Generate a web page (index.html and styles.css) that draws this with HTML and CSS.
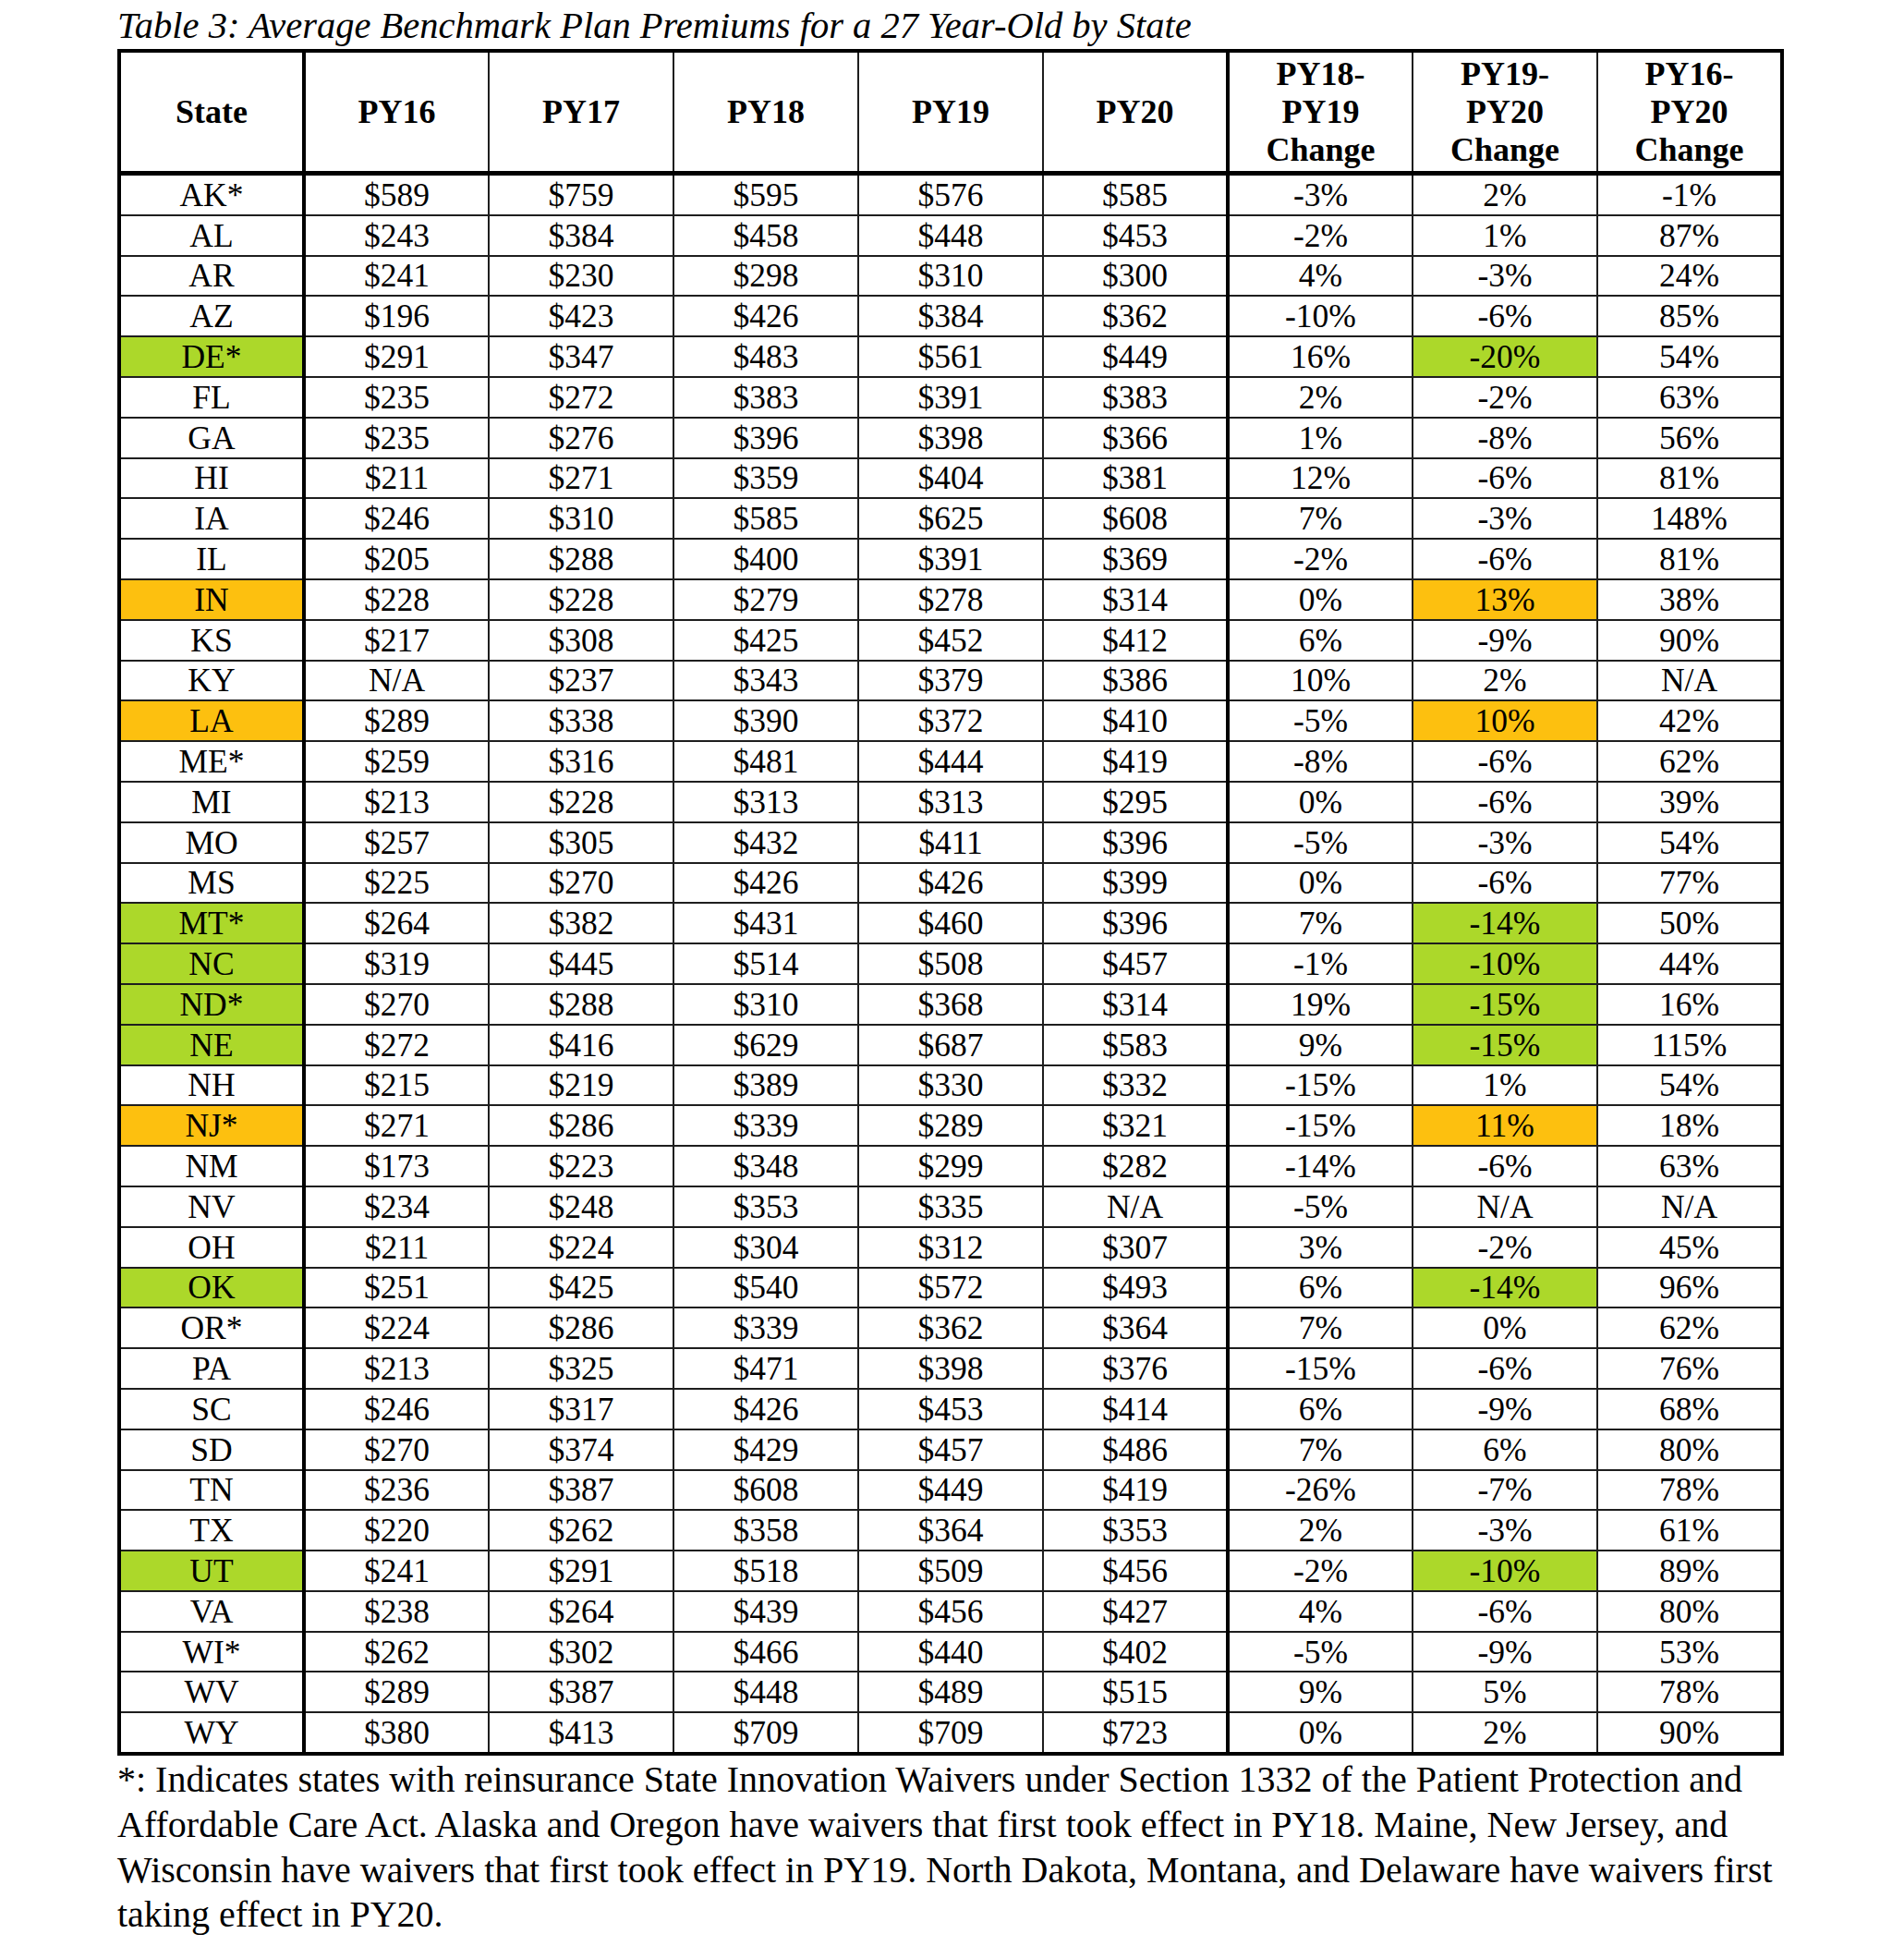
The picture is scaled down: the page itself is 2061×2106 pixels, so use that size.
FILE: index.html
```html
<!DOCTYPE html>
<html>
<head>
<meta charset="utf-8">
<link rel="stylesheet" href="styles.css">
</head>
<body>
<div class="page">
<div class="caption">Table 3: Average Benchmark Plan Premiums for a 27 Year-Old by State</div>
<table class="data">
<colgroup><col><col><col><col><col><col><col><col><col></colgroup>
<thead>
<tr><th class="sep">State</th><th>PY16</th><th>PY17</th><th>PY18</th><th>PY19</th><th class="sep">PY20</th><th>PY18-<br>PY19<br>Change</th><th>PY19-<br>PY20<br>Change</th><th>PY16-<br>PY20<br>Change</th></tr>
</thead>
<tbody>
<tr><td class="sep">AK*</td><td>$589</td><td>$759</td><td>$595</td><td>$576</td><td class="sep">$585</td><td>-3%</td><td>2%</td><td>-1%</td></tr>
<tr><td class="sep">AL</td><td>$243</td><td>$384</td><td>$458</td><td>$448</td><td class="sep">$453</td><td>-2%</td><td>1%</td><td>87%</td></tr>
<tr><td class="sep">AR</td><td>$241</td><td>$230</td><td>$298</td><td>$310</td><td class="sep">$300</td><td>4%</td><td>-3%</td><td>24%</td></tr>
<tr><td class="sep">AZ</td><td>$196</td><td>$423</td><td>$426</td><td>$384</td><td class="sep">$362</td><td>-10%</td><td>-6%</td><td>85%</td></tr>
<tr><td class="sep green">DE*</td><td>$291</td><td>$347</td><td>$483</td><td>$561</td><td class="sep">$449</td><td>16%</td><td class="green">-20%</td><td>54%</td></tr>
<tr><td class="sep">FL</td><td>$235</td><td>$272</td><td>$383</td><td>$391</td><td class="sep">$383</td><td>2%</td><td>-2%</td><td>63%</td></tr>
<tr><td class="sep">GA</td><td>$235</td><td>$276</td><td>$396</td><td>$398</td><td class="sep">$366</td><td>1%</td><td>-8%</td><td>56%</td></tr>
<tr><td class="sep">HI</td><td>$211</td><td>$271</td><td>$359</td><td>$404</td><td class="sep">$381</td><td>12%</td><td>-6%</td><td>81%</td></tr>
<tr><td class="sep">IA</td><td>$246</td><td>$310</td><td>$585</td><td>$625</td><td class="sep">$608</td><td>7%</td><td>-3%</td><td>148%</td></tr>
<tr><td class="sep">IL</td><td>$205</td><td>$288</td><td>$400</td><td>$391</td><td class="sep">$369</td><td>-2%</td><td>-6%</td><td>81%</td></tr>
<tr><td class="sep orange">IN</td><td>$228</td><td>$228</td><td>$279</td><td>$278</td><td class="sep">$314</td><td>0%</td><td class="orange">13%</td><td>38%</td></tr>
<tr><td class="sep">KS</td><td>$217</td><td>$308</td><td>$425</td><td>$452</td><td class="sep">$412</td><td>6%</td><td>-9%</td><td>90%</td></tr>
<tr><td class="sep">KY</td><td>N/A</td><td>$237</td><td>$343</td><td>$379</td><td class="sep">$386</td><td>10%</td><td>2%</td><td>N/A</td></tr>
<tr><td class="sep orange">LA</td><td>$289</td><td>$338</td><td>$390</td><td>$372</td><td class="sep">$410</td><td>-5%</td><td class="orange">10%</td><td>42%</td></tr>
<tr><td class="sep">ME*</td><td>$259</td><td>$316</td><td>$481</td><td>$444</td><td class="sep">$419</td><td>-8%</td><td>-6%</td><td>62%</td></tr>
<tr><td class="sep">MI</td><td>$213</td><td>$228</td><td>$313</td><td>$313</td><td class="sep">$295</td><td>0%</td><td>-6%</td><td>39%</td></tr>
<tr><td class="sep">MO</td><td>$257</td><td>$305</td><td>$432</td><td>$411</td><td class="sep">$396</td><td>-5%</td><td>-3%</td><td>54%</td></tr>
<tr><td class="sep">MS</td><td>$225</td><td>$270</td><td>$426</td><td>$426</td><td class="sep">$399</td><td>0%</td><td>-6%</td><td>77%</td></tr>
<tr><td class="sep green">MT*</td><td>$264</td><td>$382</td><td>$431</td><td>$460</td><td class="sep">$396</td><td>7%</td><td class="green">-14%</td><td>50%</td></tr>
<tr><td class="sep green">NC</td><td>$319</td><td>$445</td><td>$514</td><td>$508</td><td class="sep">$457</td><td>-1%</td><td class="green">-10%</td><td>44%</td></tr>
<tr><td class="sep green">ND*</td><td>$270</td><td>$288</td><td>$310</td><td>$368</td><td class="sep">$314</td><td>19%</td><td class="green">-15%</td><td>16%</td></tr>
<tr><td class="sep green">NE</td><td>$272</td><td>$416</td><td>$629</td><td>$687</td><td class="sep">$583</td><td>9%</td><td class="green">-15%</td><td>115%</td></tr>
<tr><td class="sep">NH</td><td>$215</td><td>$219</td><td>$389</td><td>$330</td><td class="sep">$332</td><td>-15%</td><td>1%</td><td>54%</td></tr>
<tr><td class="sep orange">NJ*</td><td>$271</td><td>$286</td><td>$339</td><td>$289</td><td class="sep">$321</td><td>-15%</td><td class="orange">11%</td><td>18%</td></tr>
<tr><td class="sep">NM</td><td>$173</td><td>$223</td><td>$348</td><td>$299</td><td class="sep">$282</td><td>-14%</td><td>-6%</td><td>63%</td></tr>
<tr><td class="sep">NV</td><td>$234</td><td>$248</td><td>$353</td><td>$335</td><td class="sep">N/A</td><td>-5%</td><td>N/A</td><td>N/A</td></tr>
<tr><td class="sep">OH</td><td>$211</td><td>$224</td><td>$304</td><td>$312</td><td class="sep">$307</td><td>3%</td><td>-2%</td><td>45%</td></tr>
<tr><td class="sep green">OK</td><td>$251</td><td>$425</td><td>$540</td><td>$572</td><td class="sep">$493</td><td>6%</td><td class="green">-14%</td><td>96%</td></tr>
<tr><td class="sep">OR*</td><td>$224</td><td>$286</td><td>$339</td><td>$362</td><td class="sep">$364</td><td>7%</td><td>0%</td><td>62%</td></tr>
<tr><td class="sep">PA</td><td>$213</td><td>$325</td><td>$471</td><td>$398</td><td class="sep">$376</td><td>-15%</td><td>-6%</td><td>76%</td></tr>
<tr><td class="sep">SC</td><td>$246</td><td>$317</td><td>$426</td><td>$453</td><td class="sep">$414</td><td>6%</td><td>-9%</td><td>68%</td></tr>
<tr><td class="sep">SD</td><td>$270</td><td>$374</td><td>$429</td><td>$457</td><td class="sep">$486</td><td>7%</td><td>6%</td><td>80%</td></tr>
<tr><td class="sep">TN</td><td>$236</td><td>$387</td><td>$608</td><td>$449</td><td class="sep">$419</td><td>-26%</td><td>-7%</td><td>78%</td></tr>
<tr><td class="sep">TX</td><td>$220</td><td>$262</td><td>$358</td><td>$364</td><td class="sep">$353</td><td>2%</td><td>-3%</td><td>61%</td></tr>
<tr><td class="sep green">UT</td><td>$241</td><td>$291</td><td>$518</td><td>$509</td><td class="sep">$456</td><td>-2%</td><td class="green">-10%</td><td>89%</td></tr>
<tr><td class="sep">VA</td><td>$238</td><td>$264</td><td>$439</td><td>$456</td><td class="sep">$427</td><td>4%</td><td>-6%</td><td>80%</td></tr>
<tr><td class="sep">WI*</td><td>$262</td><td>$302</td><td>$466</td><td>$440</td><td class="sep">$402</td><td>-5%</td><td>-9%</td><td>53%</td></tr>
<tr><td class="sep">WV</td><td>$289</td><td>$387</td><td>$448</td><td>$489</td><td class="sep">$515</td><td>9%</td><td>5%</td><td>78%</td></tr>
<tr><td class="sep">WY</td><td>$380</td><td>$413</td><td>$709</td><td>$709</td><td class="sep">$723</td><td>0%</td><td>2%</td><td>90%</td></tr>
</tbody>
</table>
<p class="note">*: Indicates states with reinsurance State Innovation Waivers under Section 1332 of the Patient Protection and Affordable Care Act. Alaska and Oregon have waivers that first took effect in PY18. Maine, New Jersey, and Wisconsin have waivers that first took effect in PY19. North Dakota, Montana, and Delaware have waivers first taking effect in PY20.</p>
</div>
</body>
</html>
```

FILE: styles.css
```css
html, body {
  margin: 0;
  padding: 0;
  background: #ffffff;
}

.page {
  width: 1800px;
  padding-left: 127px;
  font-family: "Liberation Serif", "Times New Roman", serif;
  color: #000;
}

.caption {
  font-family: "Liberation Serif", "Times New Roman", serif;
  font-style: italic;
  font-size: 40.5px;
  line-height: 44px;
  height: 53px;
  padding-top: 6px;
  box-sizing: border-box;
  white-space: nowrap;
}

.data {
  width: 1800px;
  table-layout: fixed;
  border-collapse: collapse;
  border: 4px solid #000;
}

.data col {
  width: 200px;
}

.data th,
.data td {
  padding: 0;
  text-align: center;
  vertical-align: middle;
  border: 2px solid #1e1e1e;
}

.data th {
  height: 128px;
  font-size: 36px;
  line-height: 41px;
  font-weight: bold;
  border-bottom: 5px solid #000;
}

.data td {
  height: 41.8px;
  font-size: 35.5px;
  line-height: 40px;
}

.data .sep {
  border-right: 4px solid #000;
}

.data .green {
  background: #acd82a;
}

.data .orange {
  background: #fdc00f;
}

.note {
  font-family: "Liberation Serif", "Times New Roman", serif;
  margin: 0;
  padding-top: 2px;
  width: 1830px;
  font-size: 40px;
  line-height: 48.8px;
}
```
